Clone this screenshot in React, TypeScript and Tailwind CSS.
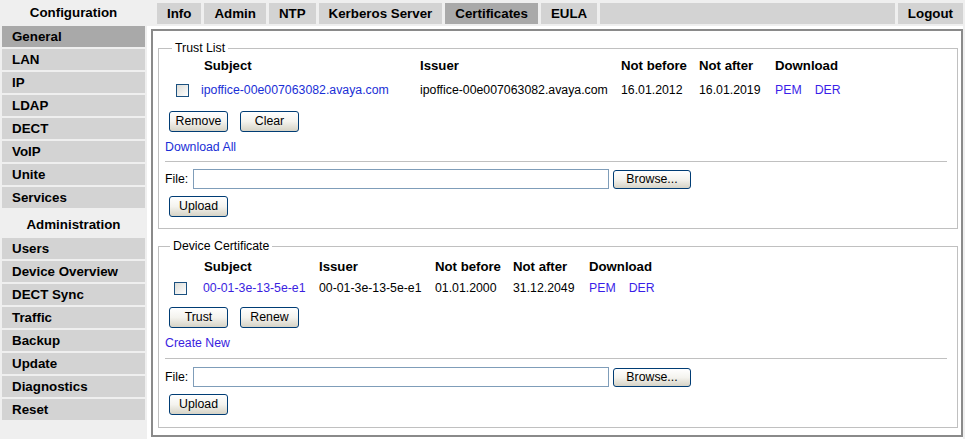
import type { ReactNode } from 'react'

const configItems = ['General', 'LAN', 'IP', 'LDAP', 'DECT', 'VoIP', 'Unite', 'Services']
const adminItems = ['Users', 'Device Overview', 'DECT Sync', 'Traffic', 'Backup', 'Update', 'Diagnostics', 'Reset']
const tabs = ['Info', 'Admin', 'NTP', 'Kerberos Server', 'Certificates', 'EULA']

function NavItem({ label, active }: { label: string; active?: boolean }) {
  return (
    <div
      className={`ml-[2px] mb-[2px] flex h-[21px] w-[143px] items-center pl-[10px] text-[13.33px] font-bold text-black ${
        active ? 'bg-[#a9a9a9]' : 'bg-[#d3d3d3]'
      }`}
    >
      {label}
    </div>
  )
}

function Btn({ children, className = '' }: { children: ReactNode; className?: string }) {
  return (
    <button
      className={`flex items-center justify-center rounded-[3px] border border-[#003c74] bg-gradient-to-b from-white via-[#f4f3ee] to-[#d6d3c6] text-[12.3px] text-black ${className}`}
    >
      {children}
    </button>
  )
}

function Checkbox() {
  return <span className="block h-[13px] w-[13px] border border-[#1c5180] bg-gradient-to-br from-[#dcdcd7] to-white" />
}

function FileRow({ className }: { className: string }) {
  return (
    <div className={className}>
      <div className="flex items-center">
        <span className="w-[28px] text-[12.3px]">File:</span>
        <span className="h-[20px] w-[416px] border border-[#7f9db9] bg-white" />
        <Btn className="ml-[4px] h-[19px] w-[78px]">Browse...</Btn>
      </div>
      <Btn className="ml-[4px] mt-[7px] h-[21px] w-[59px]">Upload</Btn>
    </div>
  )
}

type Cert = {
  legend: string
  legendClass: string
  grid: string
  boxPad: string
  subjectHead: string
  headRow: string
  dataRow: string
  subject: string
  subjectColor: string
  issuer: string
  notBefore: string
  notAfter: string
  buttons: [string, string]
  btnRow: string
  link: string
  linkRow: string
  hrClass: string
  fileRow: string
  bottom: string
  fieldsetClass: string
}

function CertBox(c: Cert) {
  return (
    <fieldset className={`border border-[#c0c0c0] pl-[6px] pr-[10px] ${c.bottom} ${c.fieldsetClass}`}>
      <legend className={`px-[3px] text-[12.3px] leading-[14px] ${c.legendClass}`}>{c.legend}</legend>

      <div className={`grid h-[18px] items-center text-[13.2px] font-bold ${c.grid} ${c.headRow}`}>
        <span />
        <span className={c.subjectHead}>Subject</span>
        <span>Issuer</span>
        <span>Not before</span>
        <span>Not after</span>
        <span>Download</span>
      </div>

      <div className={`grid h-[22px] items-center text-[12.3px] ${c.grid} ${c.dataRow}`}>
        <span className={c.boxPad}>
          <Checkbox />
        </span>
        <a href="#" className={c.subjectColor}>{c.subject}</a>
        <span>{c.issuer}</span>
        <span>{c.notBefore}</span>
        <span>{c.notAfter}</span>
        <span className="flex gap-[13px] text-[#3a1ee8]">
          <a href="#">PEM</a>
          <a href="#">DER</a>
        </span>
      </div>

      <div className={`ml-[4px] flex gap-[12px] ${c.btnRow}`}>
        <Btn className="h-[21px] w-[59px]">{c.buttons[0]}</Btn>
        <Btn className="h-[21px] w-[59px]">{c.buttons[1]}</Btn>
      </div>

      <a href="#" className={`block h-[15px] text-[12.3px] leading-[15px] ${c.subjectColor} ${c.linkRow}`}>
        {c.link}
      </a>

      <div className={`h-px bg-[#c0c0c0] ${c.hrClass}`} />

      <FileRow className={c.fileRow} />
    </fieldset>
  )
}

export default function App() {
  return (
    <div className="flex h-[439px] w-[965px] overflow-hidden bg-[#efefef] font-['Liberation_Sans',Arial,sans-serif] text-black">
      {/* left menu */}
      <div className="w-[147px] shrink-0">
        <div className="flex h-[26px] items-center justify-center text-[13.33px] font-bold">Configuration</div>
        {configItems.map((item, i) => (
          <NavItem key={item} label={item} active={i === 0} />
        ))}
        <div className="flex h-[28px] items-center justify-center pt-[2px] text-[13.33px] font-bold">Administration</div>
        {adminItems.map((item) => (
          <NavItem key={item} label={item} />
        ))}
      </div>

      <div className="flex flex-1 flex-col">
        {/* tab bar */}
        <div className="flex h-[24px] gap-[3px] pl-[10px] pr-[2px] pt-[3px] text-[13.33px] font-bold">
          {tabs.map((t) => (
            <div
              key={t}
              className={`flex h-[21px] items-center px-[10px] ${t === 'Certificates' ? 'bg-[#a9a9a9]' : 'bg-[#d3d3d3]'}`}
            >
              {t}
            </div>
          ))}
          <div className="h-[21px] flex-1 bg-[#d3d3d3]" />
          <div className="flex h-[21px] items-center bg-[#d3d3d3] px-[10px]">Logout</div>
        </div>

        <div className="mt-[2px] mr-[2px] flex flex-1 flex-col bg-white pl-[4px] pt-[3px]">
          <div className="mb-[2px] flex-1 border-2 border-[#8a8a8a] pl-[5px] pr-[3px] pt-[10px]">
            <CertBox
              legend="Trust List"
              legendClass="ml-[7px]"
              fieldsetClass=""
              grid="grid-cols-[36px_219px_201px_78px_76px_1fr]"
              boxPad="pl-[11px]"
              subjectHead="pl-[3px]"
              headRow="mt-[1px]"
              dataRow="mt-[5px]"
              subject="ipoffice-00e007063082.avaya.com"
              subjectColor="text-[#1a2fd6]"
              issuer="ipoffice-00e007063082.avaya.com"
              notBefore="16.01.2012"
              notAfter="16.01.2019"
              buttons={['Remove', 'Clear']}
              btnRow="mt-[10px]"
              link="Download All"
              linkRow="mt-[8px]"
              hrClass="mt-[6px]"
              fileRow="mt-[7px]"
              bottom="pb-[11px]"
            />
            <CertBox
              legend="Device Certificate"
              legendClass="ml-[5px]"
              fieldsetClass="mt-[10px]"
              grid="grid-cols-[38px_116px_116px_78px_76px_1fr]"
              boxPad="pl-[9px]"
              subjectHead="pl-[1px]"
              headRow="mt-[4px]"
              dataRow="mt-[2px]"
              subject="00-01-3e-13-5e-e1"
              subjectColor="text-[#3a1ee0]"
              issuer="00-01-3e-13-5e-e1"
              notBefore="01.01.2000"
              notAfter="31.12.2049"
              buttons={['Trust', 'Renew']}
              btnRow="mt-[8px]"
              link="Create New"
              linkRow="mt-[8px]"
              hrClass="mt-[7px]"
              fileRow="mt-[8px]"
              bottom="pb-[12px]"
            />
          </div>
        </div>
      </div>
    </div>
  )
}
